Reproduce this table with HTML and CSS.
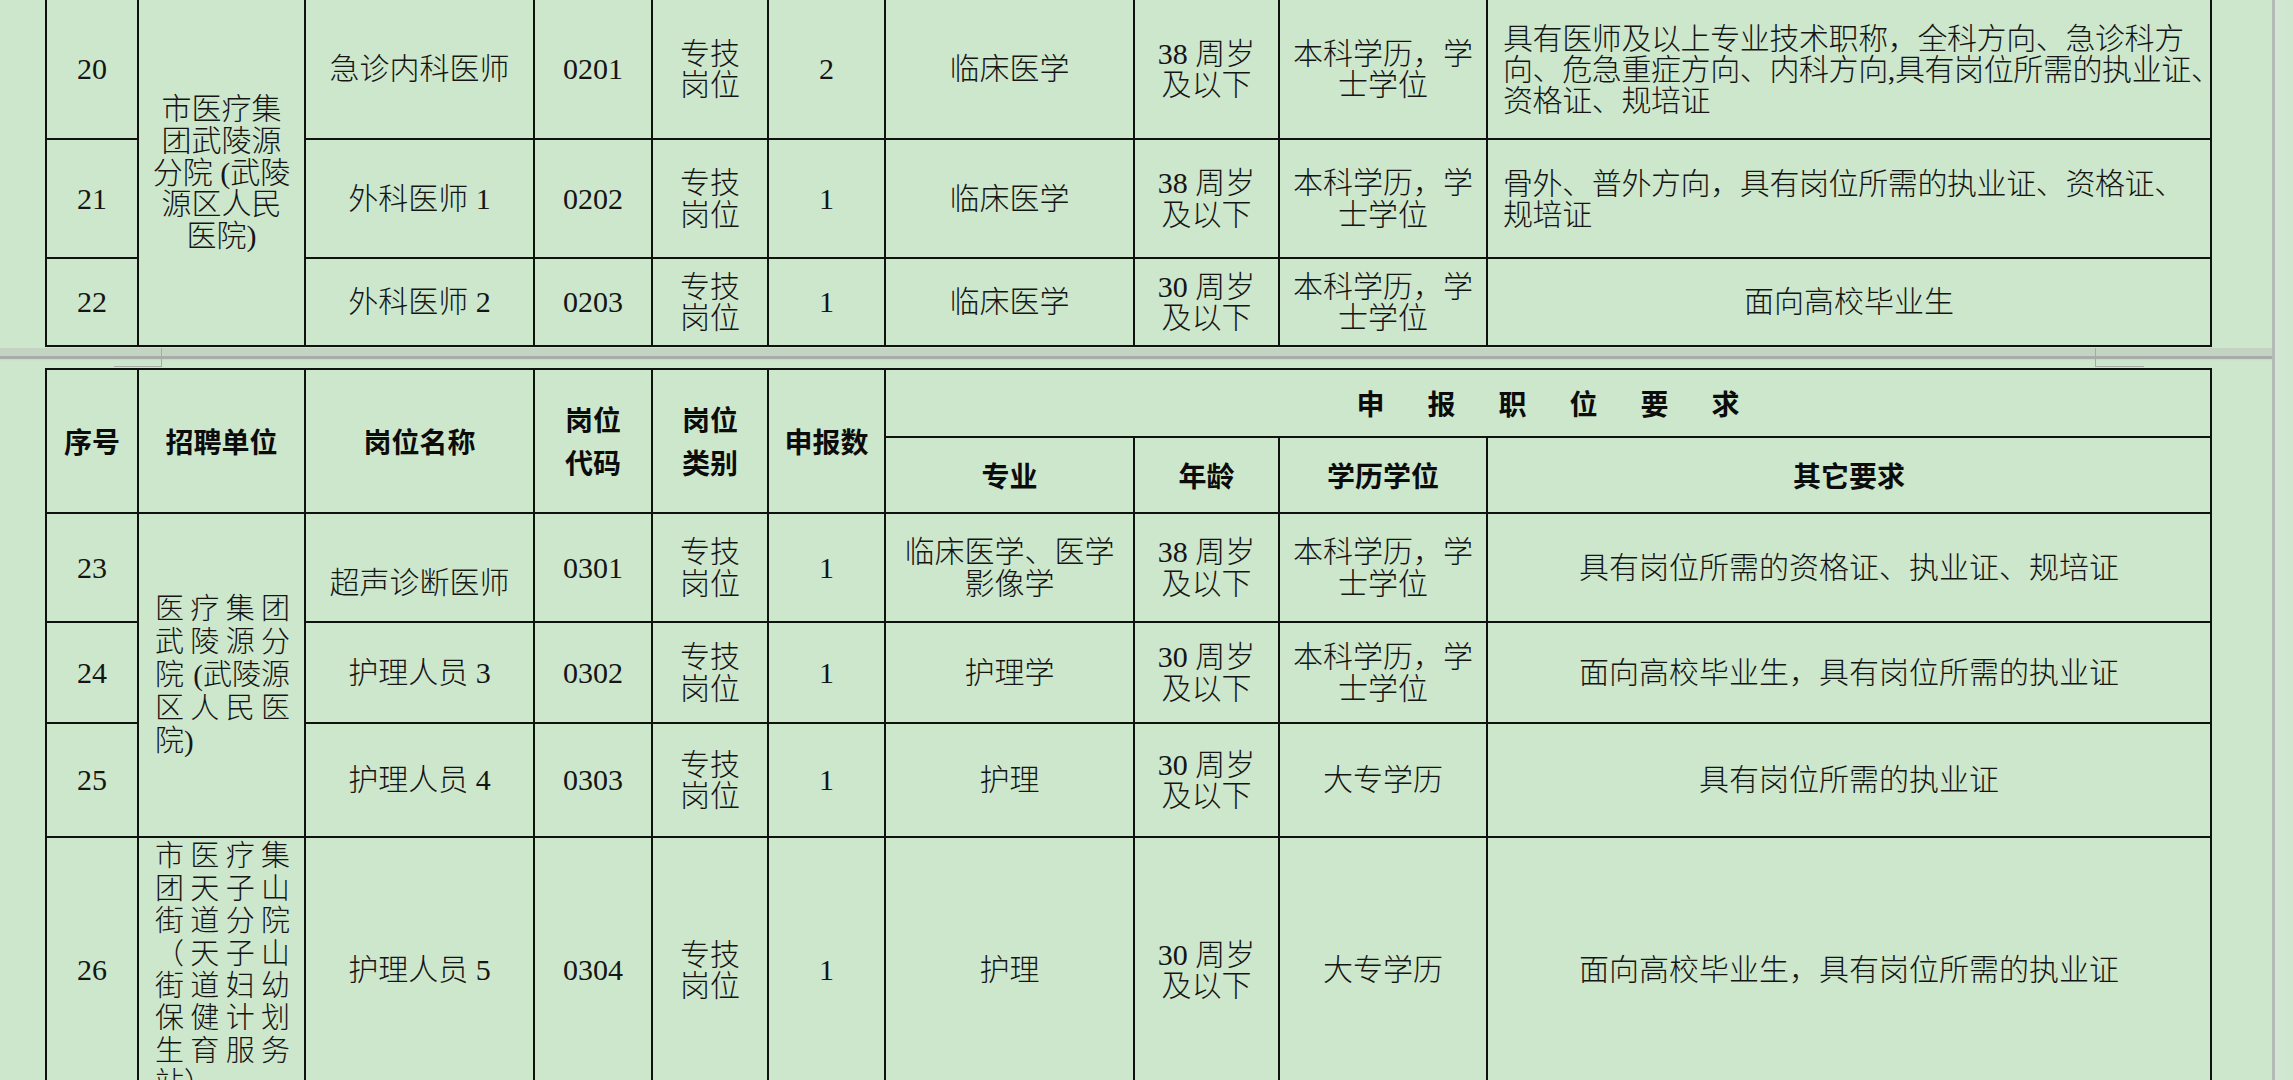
FILE: index.html
```html
<!DOCTYPE html>
<html lang="zh-CN">
<head>
<meta charset="utf-8">
<title>招聘岗位表</title>
<link rel="stylesheet" href="styles.css">
</head>
<body>
<div class="sheet">
  <div class="page page-top">
    <table class="tbl tbl1">
      <colgroup>
        <col class="c1"><col class="c2"><col class="c3"><col class="c4"><col class="c5"><col class="c6"><col class="c7"><col class="c8"><col class="c9"><col class="c10">
      </colgroup>
      <tbody>
        <tr class="r20">
          <td>20</td>
          <td rowspan="3" class="unit">市医疗集<br>团武陵源<br>分院 (武陵<br>源区人民<br>医院)</td>
          <td>急诊内科医师</td>
          <td>0201</td>
          <td>专技<br>岗位</td>
          <td>2</td>
          <td>临床医学</td>
          <td>38 周岁<br>及以下</td>
          <td>本科学历，学<br>士学位</td>
          <td class="other-left">具有医师及以上专业技术职称，全科方向、急诊科方<br>向、危急重症方向、内科方向,具有岗位所需的执业证、<br>资格证、规培证</td>
        </tr>
        <tr class="r21">
          <td>21</td>
          <td>外科医师 1</td>
          <td>0202</td>
          <td>专技<br>岗位</td>
          <td>1</td>
          <td>临床医学</td>
          <td>38 周岁<br>及以下</td>
          <td>本科学历，学<br>士学位</td>
          <td class="other-left">骨外、普外方向，具有岗位所需的执业证、资格证、<br>规培证</td>
        </tr>
        <tr class="r22">
          <td>22</td>
          <td>外科医师 2</td>
          <td>0203</td>
          <td>专技<br>岗位</td>
          <td>1</td>
          <td>临床医学</td>
          <td>30 周岁<br>及以下</td>
          <td>本科学历，学<br>士学位</td>
          <td>面向高校毕业生</td>
        </tr>
      </tbody>
    </table>
  </div>

  <div class="pagebreak"></div>

  <div class="page page-bottom">
    <table class="tbl tbl2">
      <colgroup>
        <col class="c1"><col class="c2"><col class="c3"><col class="c4"><col class="c5"><col class="c6"><col class="c7"><col class="c8"><col class="c9"><col class="c10">
      </colgroup>
      <thead>
        <tr class="h1">
          <th rowspan="2">序号</th>
          <th rowspan="2">招聘单位</th>
          <th rowspan="2">岗位名称</th>
          <th rowspan="2">岗位<br>代码</th>
          <th rowspan="2">岗位<br>类别</th>
          <th rowspan="2">申报数</th>
          <th colspan="4" class="spread">申报职位要求</th>
        </tr>
        <tr class="h2">
          <th>专业</th>
          <th>年龄</th>
          <th>学历学位</th>
          <th>其它要求</th>
        </tr>
      </thead>
      <tbody>
        <tr class="r23">
          <td>23</td>
          <td rowspan="3" class="dist dist-a">
            <div class="ln"><span>医</span><span>疗</span><span>集</span><span>团</span></div>
            <div class="ln"><span>武</span><span>陵</span><span>源</span><span>分</span></div>
            <div class="ln"><span>院</span><span>(武陵源</span></div>
            <div class="ln"><span>区</span><span>人</span><span>民</span><span>医</span></div>
            <div class="ln ln-end"><span>院)</span></div>
          </td>
          <td class="lower">超声诊断医师</td>
          <td>0301</td>
          <td>专技<br>岗位</td>
          <td>1</td>
          <td>临床医学、医学<br>影像学</td>
          <td>38 周岁<br>及以下</td>
          <td>本科学历，学<br>士学位</td>
          <td>具有岗位所需的资格证、执业证、规培证</td>
        </tr>
        <tr class="r24">
          <td>24</td>
          <td>护理人员 3</td>
          <td>0302</td>
          <td>专技<br>岗位</td>
          <td>1</td>
          <td>护理学</td>
          <td>30 周岁<br>及以下</td>
          <td>本科学历，学<br>士学位</td>
          <td>面向高校毕业生，具有岗位所需的执业证</td>
        </tr>
        <tr class="r25">
          <td>25</td>
          <td>护理人员 4</td>
          <td>0303</td>
          <td>专技<br>岗位</td>
          <td>1</td>
          <td>护理</td>
          <td>30 周岁<br>及以下</td>
          <td>大专学历</td>
          <td>具有岗位所需的执业证</td>
        </tr>
        <tr class="r26">
          <td>26</td>
          <td class="dist dist-b">
            <div class="ln"><span>市</span><span>医</span><span>疗</span><span>集</span></div>
            <div class="ln"><span>团</span><span>天</span><span>子</span><span>山</span></div>
            <div class="ln"><span>街</span><span>道</span><span>分</span><span>院</span></div>
            <div class="ln"><span>（</span><span>天</span><span>子</span><span>山</span></div>
            <div class="ln"><span>街</span><span>道</span><span>妇</span><span>幼</span></div>
            <div class="ln"><span>保</span><span>健</span><span>计</span><span>划</span></div>
            <div class="ln"><span>生</span><span>育</span><span>服</span><span>务</span></div>
            <div class="ln ln-end"><span>站）</span></div>
          </td>
          <td>护理人员 5</td>
          <td>0304</td>
          <td>专技<br>岗位</td>
          <td>1</td>
          <td>护理</td>
          <td>30 周岁<br>及以下</td>
          <td>大专学历</td>
          <td>面向高校毕业生，具有岗位所需的执业证</td>
        </tr>
      </tbody>
    </table>
  </div>
</div>
</body>
</html>
```

FILE: styles.css
```css
html, body {
  margin: 0;
  padding: 0;
  height: 1080px;
  overflow: hidden;
}

body {
  background:
    linear-gradient(to right,
      #cde7cc 0, #cde7cc 2272px,
      #b4bab5 2272px, #b4bab5 2275px,
      #d3e8d3 2275px, #cfe6cf 100%);
  font-family: "Liberation Serif", "Noto Sans CJK SC", serif;
  color: #151515;
}

.sheet {
  width: 2272px;
}

.page {
  padding-left: 45px;
}

.tbl {
  border-collapse: collapse;
  table-layout: fixed;
  width: 2167px;
}

.c1 { width: 92px; }
.c2 { width: 167px; }
.c3 { width: 229px; }
.c4 { width: 118px; }
.c5 { width: 116px; }
.c6 { width: 117px; }
.c7 { width: 249px; }
.c8 { width: 145px; }
.c9 { width: 208px; }
.c10 { width: 724px; }

.tbl td,
.tbl th {
  border: 2px solid #101210;
  padding: 0;
  text-align: center;
  vertical-align: middle;
  white-space: nowrap;
  font-size: 30px;
  line-height: 31.5px;
  font-weight: 300;
}

.tbl1 {
  border-top: hidden;
}

.tbl1 .r20 td { height: 138px; }
.tbl1 .r21 td { height: 117px; }
.tbl1 .r22 td { height: 86px; }

.other-left {
  text-align: left !important;
  padding-left: 15px !important;
  line-height: 31px !important;
  letter-spacing: -0.4px;
}

.unit {
  line-height: 31.7px !important;
}

.pagebreak {
  height: 21px;
  background:
    linear-gradient(#a6aaa7, #a6aaa7) 114px 19px / 48px 1px no-repeat,
    linear-gradient(#a6aaa7, #a6aaa7) 2096px 19px / 48px 1px no-repeat,
    linear-gradient(#a6aaa7, #a6aaa7) 161px 1px / 1px 19px no-repeat,
    linear-gradient(#a6aaa7, #a6aaa7) 2095px 1px / 1px 19px no-repeat,
    linear-gradient(to bottom,
      #cde7cc 0, #cde7cc 1px,
      #c3d4c2 1px, #c3d4c2 9px,
      #a9adaa 9px, #a9adaa 12px,
      #c6d9c5 12px, #cde7cc 14px, #cde7cc 100%) 0 0 / 2272px 100% no-repeat;
}

.tbl2 th {
  font-family: "Noto Sans CJK SC", sans-serif;
  font-weight: 700;
  font-size: 28px;
  line-height: 43px;
  color: #0c0c0c;
}

.tbl2 .h1 th { height: 66px; }
.tbl2 .h2 th { height: 74px; }

.tbl2 .spread {
  letter-spacing: 43px;
  padding-left: 43px;
}

.tbl2 .r23 td { height: 107px; }
.tbl2 .r24 td { height: 99px; }
.tbl2 .r25 td { height: 112px; }
.tbl2 .r26 td { height: 264px; }

.tbl2 .r23 td.lower {
  height: 77px;
  padding-top: 30px;
}

.dist {
  padding: 0 14px 0 16px !important;
  font-size: 29px !important;
}

.dist .ln {
  display: flex;
  justify-content: space-between;
  line-height: 33px;
}

.dist-b .ln {
  line-height: 32.4px;
}

.dist .ln-end {
  justify-content: flex-start;
}
```
